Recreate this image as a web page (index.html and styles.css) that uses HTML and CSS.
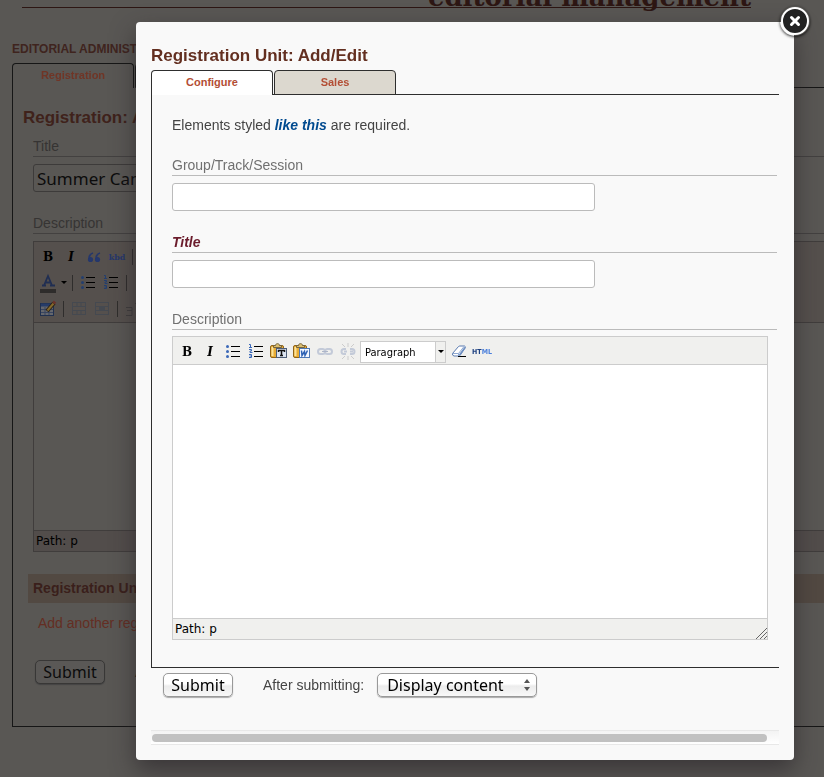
FILE: index.html
```
<!DOCTYPE html>
<html lang="en">
<head>
<meta charset="utf-8">
<title>Registration Unit: Add/Edit</title>
<link rel="stylesheet" href="styles.css">
</head>
<body>
<svg class="defs" width="0" height="0" aria-hidden="true">
  <symbol id="ul" viewBox="0 0 20 20">
    <g fill="#3b68b8"><circle cx="4.500" cy="4.500" r="1.500"/><circle cx="4.500" cy="9.500" r="1.500"/><circle cx="4.500" cy="14.500" r="1.500"/></g>
    <path d="M8 4.500h9M8 9.500h9M8 14.500h9" stroke="currentColor"/>
  </symbol>
  <symbol id="ol" viewBox="0 0 20 20">
    <path d="M3 2.500h1.500v3M3 5.500h3M3 7.500h2.500v1.500h-1.500v1.500h2.500M3 12.500h2.500v3H3M3.500 14h2" fill="none" stroke="#3b68b8"/>
    <path d="M8 4.500h9M8 9.500h9M8 14.500h9" stroke="currentColor"/>
  </symbol>
  <symbol id="clip" viewBox="0 0 20 20">
    <rect x="1.500" y="3.500" width="13" height="12" rx="1.500" fill="#e9ad35" stroke="#8f6418"/>
    <path d="M3.500 5v9" stroke="#fbe29a" stroke-width="2"/>
    <path d="M4.500 5.500v-2h2c0-2.500 4-2.500 4 0h2v2z" fill="#d9bd70" stroke="#77643a"/>
  </symbol>
  <symbol id="chain" viewBox="0 0 20 20">
    <g fill="none" stroke="#c3cad8" stroke-width="2"><rect x="3" y="7" width="7" height="5" rx="2.500"/><rect x="10" y="7" width="7" height="5" rx="2.500"/></g>
    <path d="M7 9.500h6" stroke="#aeb6c8"/>
  </symbol>
</svg>

<div class="page">
  <header class="masthead"><h1>editorial management</h1></header>
  <h2 class="area">EDITORIAL ADMINISTRATION</h2>
  <nav class="tabs"><a class="tab on" href="#registration">Registration</a><a class="tab" href="#more" aria-hidden="true"></a><i class="rest"></i></nav>
  <main class="sheet">
    <h3 class="heading">Registration: Add/Edit</h3>
    <div class="fields">
      <label class="label" for="camp">Title</label>
      <input class="box" id="camp" type="text" value="Summer Camp">
      <div class="label">Description</div>
      <div class="editor">
        <div class="bar">
          <div class="row">
            <button class="tool bold">B</button><button class="tool italic">I</button>
            <button class="tool" aria-label="Quote"><svg viewBox="0 0 20 20"><g fill="#25376b"><circle cx="6.500" cy="12.500" r="2.600"/><circle cx="13.500" cy="12.500" r="2.600"/></g><path d="M5 12q0-5 4-6M12 12q0-5 4-6" fill="none" stroke="#25376b" stroke-width="1.800"/></svg></button>
            <button class="tool kbd">kbd</button><i class="sep"></i>
          </div>
          <div class="row">
            <button class="tool" aria-label="Text colour"><svg viewBox="0 0 20 20"><path d="M6 12.500 10 3l4 9.500M7.500 9.500h5M4 12.500h4M12 12.500h5" fill="none" stroke="#202e52" stroke-width="1.800"/><path d="M2 16h16v4H2z" fill="#2e2c2b"/></svg></button>
            <svg class="caret" viewBox="0 0 6 4"><path d="M0 0h6L3 3z"/></svg><i class="sep"></i>
            <button class="tool dim" aria-label="Bullets"><svg><use href="#ul"/></svg></button>
            <button class="tool dim" aria-label="Numbers"><svg><use href="#ol"/></svg></button><i class="sep"></i>
          </div>
          <div class="row">
            <button class="tool" aria-label="Edit table"><svg viewBox="0 0 20 20"><rect x="2.500" y="4.500" width="13" height="12" fill="#65676c" stroke="#20304f"/><path d="M3 6h12" stroke="#263c69" stroke-width="3"/><path d="M3 10.500h12M3 13.500h12M7 8v8M11 8v8" stroke="#39455f"/><path d="m9 12 7-8" stroke="#2b2116" stroke-width="4"/><path d="m9.500 11.500 6-7" stroke="#856a2c" stroke-width="2"/><path d="m15.500 4.500 1.500-2" stroke="#6b332a" stroke-width="3"/></svg></button><i class="sep"></i>
            <button class="tool" aria-label="Row"><svg viewBox="0 0 20 20"><g fill="none" stroke="#454950"><rect x="3.500" y="3.500" width="13" height="12"/><path d="M4 7.500h12M4 11.500h12M8 4v3M12 4v3M8 12v3M12 12v3"/></g></svg></button>
            <button class="tool" aria-label="Cell"><svg viewBox="0 0 20 20"><g fill="none" stroke="#454950"><rect x="3.500" y="3.500" width="13" height="12"/><path d="M4 7.500h12M4 11.500h12"/></g><path d="M7 7h6v5H7z" fill="#454950"/></svg></button><i class="sep"></i>
            <button class="tool" aria-label="Insert"><svg viewBox="0 0 20 20"><path d="M3 8.500h6v3H4M9 11.500v5H3M12 4.500h5M14.500 2v5" fill="none" stroke="#3f3d3d"/></svg></button>
          </div>
        </div>
        <div class="canvas"></div>
        <div class="path">Path: p</div>
      </div>
    </div>
    <h4 class="units">Registration Units</h4>
    <a class="add" href="#add">Add another registration unit</a>
    <div class="actions"><button class="push">Submit</button><span>After submitting:</span></div>
  </main>
</div>

<div class="overlay">
  <section class="dialog" role="dialog" aria-labelledby="dialog-title">
    <button class="close" aria-label="Close"><svg viewBox="0 0 30 30"><circle cx="15" cy="15" r="13" fill="#222" stroke="#fff" stroke-width="2"/><path d="m11.500 11.500 7 7m0-7-7 7" stroke="#fff" stroke-width="3" stroke-linecap="round"/></svg></button>
    <h2 class="heading" id="dialog-title">Registration Unit: Add/Edit</h2>
    <nav class="tabs"><a class="tab on" href="#configure">Configure</a><a class="tab" href="#sales">Sales</a></nav>
    <form class="sheet">
      <p class="note">Elements styled <em>like this</em> are required.</p>
      <label class="label" for="group">Group/Track/Session</label>
      <input class="box" id="group" type="text">
      <label class="label required" for="title">Title</label>
      <input class="box" id="title" type="text">
      <div class="label">Description</div>
      <div class="editor">
        <div class="bar row">
          <button type="button" class="tool bold">B</button>
          <button type="button" class="tool italic">I</button>
          <button type="button" class="tool" aria-label="Bullets"><svg><use href="#ul"/></svg></button>
          <button type="button" class="tool" aria-label="Numbers"><svg><use href="#ol"/></svg></button>
          <button type="button" class="tool" aria-label="Paste text"><svg viewBox="0 0 20 20"><use href="#clip"/><rect x="7.500" y="6.500" width="10" height="9" fill="#dce5f1" stroke="#4e5d76"/><path d="M9.500 10V8.500h6V10M12.500 8.500v5M11 13.500h3" fill="none" stroke="#111" stroke-width="1.500"/></svg></button>
          <button type="button" class="tool" aria-label="Paste from Word"><svg viewBox="0 0 20 20"><use href="#clip"/><rect x="7.500" y="6.500" width="10" height="9" fill="#f4f8ff" stroke="#4f79b5"/><path d="m9.500 8.500.5 5 2.500-4 .5 4 2.500-5" fill="none" stroke="#2e62b4" stroke-width="1.500"/></svg></button>
          <button type="button" class="tool" aria-label="Link"><svg><use href="#chain"/></svg></button>
          <button type="button" class="tool" aria-label="Unlink"><svg viewBox="0 0 20 20"><g fill="none" stroke="#c3cad8" stroke-width="2"><path d="M8 7H6a2.500 2.500 0 0 0 0 5h2M12 7h2a2.500 2.500 0 0 1 0 5h-2M6 9.500h3M12 9.500h3"/></g><path d="m4 2 3 3M10 1v4M16 2l-3 3M4 17l3-3M10 18v-4M16 17l-3-3" stroke="#ccc" fill="none"/></svg></button>
          <div class="format"><select aria-label="Format"><option>Paragraph</option></select><span class="drop"><svg class="caret" viewBox="0 0 6 4"><path d="M0 0h6L3 3z"/></svg></span></div>
          <button type="button" class="tool" aria-label="Clear formatting"><svg viewBox="0 0 20 20"><path d="m3.500 11.500 6-7q.5-.5 1.500-.5h4.500q1.500.5.5 2l-5 7.500q-.5.500-1.500.500H5q-2-.5-1.500-2.500z" fill="#fff" stroke="#5a7bb0"/><path d="M4 11.500h5.500l5.500-7M9.500 11.500V14" fill="none" stroke="#8fa9d2"/><path d="m10.500 13 5.500-7.500" stroke="#6e8fc2" stroke-width="1.500"/><path d="M9 14.500h8" stroke="#000"/></svg></button>
          <button type="button" class="tool html">HT<b>ML</b></button>
        </div>
        <div class="canvas"></div>
        <div class="path">Path: p<svg class="grip" viewBox="0 0 11 11"><path d="M0 11 11 0M4 11l7-7M8 11l3-3" stroke="#666" fill="none"/></svg></div>
      </div>
    </form>
    <div class="actions">
      <button class="push">Submit</button>
      <label for="after">After submitting:</label>
      <span class="choice"><select id="after"><option>Display content</option></select><svg viewBox="0 0 6 12"><path d="M3 0l3 4H0zM3 12l3-4H0z" fill="#555"/></svg></span>
    </div>
    <div class="scroll"><div class="thumb"></div></div>
  </section>
</div>
</body>
</html>
```
FILE: styles.css
```
* { box-sizing: border-box; }
body { margin: 0; overflow: hidden; background: #595754; color: #444; font: 14px/20px "Liberation Sans", Arial, sans-serif; }
h1, h2, h3, h4, p { margin: 0; }
a { text-decoration: none; }
button, select, input { margin: 0; font: inherit; color: inherit; }
button { padding: 0; border: 0; background: none; }
.defs { position: absolute; }

/* Shared parts */
.heading { font-size: 17px; line-height: 20px; font-weight: bold; color: #632f20; }
.tabs { display: flex; gap: 1px; height: 24px; }
.tab { width: 122px; height: 25px; border: 1px solid #2e2e2e; border-radius: 4px 4px 0 0; background: #dcd8cf; color: #b34e35; font-size: 11px; line-height: 23px; font-weight: bold; text-align: center; }
.tab.on { background: #fff; border-bottom: 0; z-index: 1; }
.sheet { border: 1px solid #2e2e2e; border-right: 0; }
.label { display: block; height: 20px; border-bottom: 1px solid #bbb; color: #707070; line-height: 18px; }
.box { display: block; width: 423px; max-width: 100%; height: 28px; margin: 7px 0 22px; padding: 0 3px; border: 1px solid #bbb; border-radius: 3px; background: #fff; }
.editor { margin-top: 7px; border: 1px solid #ccc; color: #000; }
.bar { background: #f0f0ee; border-bottom: 1px solid #ccc; }
.row { display: flex; align-items: center; gap: 3px; }
.tool { flex: none; display: flex; align-items: center; justify-content: center; width: 20px; height: 20px; }
.tool svg { width: 20px; height: 20px; }
.bold, .italic { font: bold 12px/20px "DejaVu Serif", serif; }
.italic { font-style: italic; }
.caret { width: 6px; height: 4px; }
.path { position: relative; padding-left: 2px; border-top: 1px solid #ccc; background: #f0f0ee; font: 12px/20px "DejaVu Sans", sans-serif; }
.actions { display: flex; align-items: center; }
.push { width: 70px; height: 24px; border: 1px solid #999; border-radius: 5px; background: linear-gradient(#fff 45%, #ececec 55%, #f8f8f8); box-shadow: 0 1px 1px #aaa; color: #000; font: 16px/20px "Noto Sans", sans-serif; }

/* Page behind the dialog */
.page { display: flow-root; padding-left: 12px; color: #222; }
.masthead { display: flow-root; height: 39px; margin: 0 73px 0 10px; }
.masthead h1 { height: 15px; margin-top: -7px; border-bottom: 1px solid #2d1613; color: #2d1613; font: bold 26px/8px "DejaVu Serif", serif; text-align: right; white-space: nowrap; }
.area { font-size: 12px; line-height: 20px; color: #3f241e; margin-bottom: 4px; }
.page .heading { color: #3f221b; margin: 0 0 9px 10px; }
.page .tab { border-color: #161616; background: #4b4946; color: #703526; }
.page .tab.on { background: transparent; }
.rest { flex: 1; margin-left: -1px; border-bottom: 1px solid #161616; }
.page .tabs { height: 25px; }
.page .sheet { height: 639px; padding-top: 20px; border-color: #161616; border-top: 0; }
.page .fields { margin-left: 20px; }
.page .label { border-color: #434140; color: #363433; }
.page .box { border-color: #3d3b3a; background: transparent; color: #0c0c0c; font: 17px/24px "Noto Sans", sans-serif; }
.page .editor { border-color: #403d3c; border-right: 0; }
.page .bar { padding: 2px 4px 0; background: #55504d; border-color: #403d3c; }
.page .row { height: 26px; }
.page .canvas { height: 207px; }
.page .path { background: #524d4b; border-color: #403d3c; }
.kbd { color: #25376b; font: bold 8px/20px "DejaVu Serif", serif; }
.sep { width: 1px; height: 16px; margin: 0 2px; background: #2f2d2c; }
.dim svg { filter: brightness(.6); }
.units { margin: 22px 0 10px 15px; padding-left: 5px; background: #524942; color: #3a1f1b; font-size: 14px; line-height: 29px; }
.add { display: block; margin-left: 25px; color: #642e23; }
.page .actions { margin: 27px 0 0 22px; gap: 30px; }
.page .push { border-color: #383736; background: #5a5856; box-shadow: 0 1px 1px #444; color: #0c0c0c; }

/* Dialog */
.overlay { position: fixed; inset: 0; padding: 22px 30px 17px 136px; }
.dialog { position: relative; height: 100%; display: flex; flex-direction: column; padding: 24px 15px 15px; border-radius: 4px; background: #f9f9f9; box-shadow: 0 10px 25px rgba(40, 36, 40, .65); }
.close { position: absolute; top: -16px; right: -16px; width: 30px; height: 30px; border-radius: 50%; box-shadow: 0 1px 3px rgba(0, 0, 0, .8); }
.close svg { display: block; width: 30px; height: 30px; }
.dialog .tabs { margin-top: 4px; }
.dialog .sheet { flex: 1; display: flex; flex-direction: column; padding: 20px 2px 27px 20px; }
.note { margin-bottom: 21px; }
.note em { color: #004a8f; font-weight: bold; }
.required { color: #6b1c2c; font-weight: bold; font-style: italic; }
.dialog .editor { flex: 1; display: flex; flex-direction: column; margin: 6px 9px 0 0; }
.dialog .bar { height: 28px; padding: 2px 4px 0; }
.dialog .canvas { flex: 1; background: #fff; }
.format { display: flex; width: 86px; height: 22px; margin-left: -1px; border: 1px solid #ccc; background: #fff; }
.format select { flex: 1; min-width: 0; appearance: none; padding: 2px 4px 0; border: 0; background: none; font: 11px/18px "DejaVu Sans Condensed", "DejaVu Sans", sans-serif; }
.drop { display: flex; align-items: center; justify-content: center; width: 10px; border-left: 1px solid #ccc; background: #f0f0ee; }
.html { color: #1c3f80; font: bold 7px/20px "DejaVu Sans Condensed", "DejaVu Sans", sans-serif; }
.html b { color: #4a7fdc; }
.grip { position: absolute; right: 0; bottom: 0; width: 11px; height: 11px; }
.dialog .actions { margin: 5px 0 33px 12px; }
.dialog .actions label { margin: 0 13px 0 30px; }
.choice { position: relative; }
.choice select { display: block; appearance: none; width: 160px; height: 24px; padding: 0 9px; border: 1px solid #999; border-radius: 5px; background: linear-gradient(#fff 45%, #ececec 55%, #f8f8f8); box-shadow: 0 1px 1px #aaa; color: #000; font: 16px/20px "Noto Sans", sans-serif; }
.choice svg { position: absolute; right: 7px; top: 6px; width: 6px; height: 12px; }
.scroll { height: 15px; padding: 3px 12px 3px 1px; border: 1px solid #e8e8e8; border-width: 1px 0; background: linear-gradient(#f3f3f3, #fff); }
.thumb { height: 8px; border-radius: 4px; background: #c1c1c1; }
```
